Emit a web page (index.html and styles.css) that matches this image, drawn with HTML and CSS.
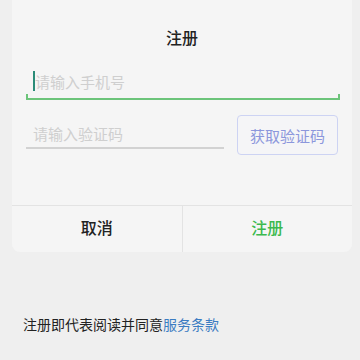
FILE: index.html
```html
<!DOCTYPE html>
<html lang="zh-CN">

<head>
    <meta charset="UTF-8">
    <meta name="viewport" content="width=device-width, initial-scale=1.0">
    <title>注册</title>
    <link rel="stylesheet" href="styles.css">
</head>

<body>

    <div class="dialog">
        <div class="dialog-title">注册</div>

        <div class="field field-active">
            <span class="caret"></span>
            <span class="placeholder">请输入手机号</span>
        </div>

        <div class="code-row">
            <div class="field field-code">
                <span class="placeholder">请输入验证码</span>
            </div>
            <button class="code-btn">获取验证码</button>
        </div>

        <div class="actions">
            <button class="action">取消</button>
            <button class="action action-primary">注册</button>
        </div>
    </div>

    <p class="terms">注册即代表阅读并同意<a href="#" class="terms-link">服务条款</a></p>

</body>

</html>
```

FILE: styles.css
```css
body {
    margin: 0;
    background-color: #efefef;
    font-family: "Noto Sans CJK SC", "Noto Sans", sans-serif;
    color: #222;
}

.dialog {
    margin: 0 8px 0 12px;
    width: 340px;
    height: 252px;
    background-color: #f5f5f5;
    border-radius: 0 0 8px 8px;
    display: flex;
    flex-direction: column;
    box-sizing: border-box;
}

.dialog-title {
    height: 64px;
    padding-top: 26px;
    box-sizing: border-box;
    line-height: 22px;
    font-size: 16px;
    font-weight: 500;
    text-align: center;
}

.field {
    position: relative;
    display: flex;
    align-items: center;
    margin: 0 12px 0 14px;
    height: 36px;
    padding-left: 7px;
    border-bottom: 1px solid #c8c8c8;
    box-sizing: border-box;
}

.field-active {
    border-bottom: 2px solid #6cc47a;
}

.field-active::before,
.field-active::after {
    content: "";
    position: absolute;
    bottom: 0;
    width: 2px;
    height: 4px;
    background-color: #6cc47a;
}

.field-active::before {
    left: 0;
}

.field-active::after {
    right: 0;
}

.caret {
    width: 2px;
    height: 20px;
    background-color: #2b8c78;
}

.placeholder {
    font-size: 15px;
    color: #cfcfcf;
}

.code-row {
    display: flex;
    align-items: flex-start;
    margin-top: 15px;
}

.field-code {
    width: 198px;
    height: 34px;
    margin-right: 0;
    padding-top: 4px;
    border-bottom: 2px solid #d2d2d2;
}

.code-btn {
    margin-left: 13px;
    width: 101px;
    height: 40px;
    border: 1px solid #cdd3f3;
    border-radius: 4px;
    background-color: #f5f5f7;
    color: #8c97dc;
    font-family: inherit;
    font-size: 15px;
    padding: 0;
}

.actions {
    margin-top: auto;
    height: 46px;
    display: flex;
    border-top: 1px solid #e3e3e3;
}

.action {
    flex: 1;
    border: none;
    background: none;
    font-family: inherit;
    font-size: 16px;
    font-weight: 500;
    color: #222;
    padding: 0 0 4px;
}

.action-primary {
    color: #3cb94e;
    border-left: 1px solid #e3e3e3;
}

.terms {
    margin: 62px 0 0;
    padding-left: 23px;
    line-height: 20px;
    font-size: 14px;
}

.terms-link {
    color: #3b7cc2;
    text-decoration: none;
}
```
